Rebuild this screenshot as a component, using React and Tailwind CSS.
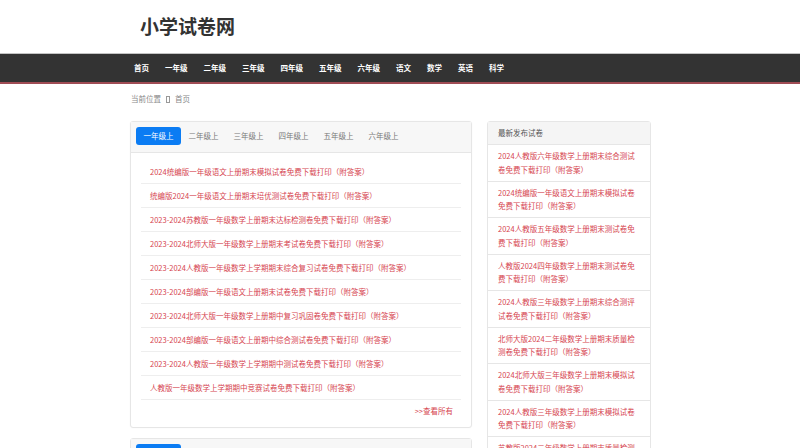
import React from "react";

const navItems = ["首页", "一年级", "二年级", "三年级", "四年级", "五年级", "六年级", "语文", "数学", "英语", "科学"];
const tabs = ["一年级上", "二年级上", "三年级上", "四年级上", "五年级上", "六年级上"];
const tabs2 = ["一年级下", "二年级下", "三年级下", "四年级下", "五年级下", "六年级下"];

const leftItems = [
  "2024统编版一年级语文上册期末模拟试卷免费下载打印（附答案）",
  "统编版2024一年级语文上册期末培优测试卷免费下载打印（附答案）",
  "2023-2024苏教版一年级数学上册期末达标检测卷免费下载打印（附答案）",
  "2023-2024北师大版一年级数学上册期末考试卷免费下载打印（附答案）",
  "2023-2024人教版一年级数学上学期期末综合复习试卷免费下载打印（附答案）",
  "2023-2024部编版一年级语文上册期末试卷免费下载打印（附答案）",
  "2023-2024北师大版一年级数学上册期中复习巩固卷免费下载打印（附答案）",
  "2023-2024部编版一年级语文上册期中综合测试卷免费下载打印（附答案）",
  "2023-2024人教版一年级数学上学期期中测试卷免费下载打印（附答案）",
  "人教版一年级数学上学期期中竞赛试卷免费下载打印（附答案）",
];

const rightItems = [
  ["2024人教版六年级数学上册期末综合测试", "卷免费下载打印（附答案）"],
  ["2024统编版一年级语文上册期末模拟试卷", "免费下载打印（附答案）"],
  ["2024人教版五年级数学上册期末测试卷免", "费下载打印（附答案）"],
  ["人教版2024四年级数学上册期末测试卷免", "费下载打印（附答案）"],
  ["2024人教版三年级数学上册期末综合测评", "试卷免费下载打印（附答案）"],
  ["北师大版2024二年级数学上册期末质量检", "测卷免费下载打印（附答案）"],
  ["2024北师大版三年级数学上册期末模拟试", "卷免费下载打印（附答案）"],
  ["2024人教版三年级数学上册期末模拟试卷", "免费下载打印（附答案）"],
  ["苏教版2024二年级数学上册期末质量检测", "卷免费下载打印（附答案）"],
];

function TabHeader({ list }) {
  return (
    <div className="flex h-[31px] border-b border-[#e6e6e6] bg-[#f7f7f7] px-[5px] pt-[5px]">
      {list.map((t, i) => (
        <span
          key={t}
          className={
            i === 0
              ? "h-[18px] rounded-[3px] bg-[#0b7cf3] px-[7.5px] text-[7.5px] leading-[18px] text-white"
              : "h-[18px] px-[7.5px] text-[7.5px] leading-[18px] text-[#777]"
          }
        >
          {t}
        </span>
      ))}
    </div>
  );
}

export default function App() {
  return (
    <div className="min-h-[448px] bg-white font-['Noto_Sans_CJK_SC',sans-serif] text-[#333]">
      <div className="h-[53px]">
        <div className="ml-[130px] w-[522px] pl-[10px] pt-[13px] text-[19px] font-bold leading-[26px] text-[#333]">
          小学试卷网
        </div>
      </div>
      <div className="h-[31px] border-t border-b-2 border-t-[#c4c4c4] border-b-[#a04c55] bg-[#333]">
        <div className="ml-[126px] flex">
          {navItems.map((n) => (
            <span key={n} className="px-[8px] text-[7.5px] font-bold leading-[28px] text-white">
              {n}
            </span>
          ))}
        </div>
      </div>
      <div className="ml-[131px] flex items-center pt-[10px] text-[7.5px] leading-[10px] text-[#888]">
        <span>当前位置</span>
        <span className="mx-[5px] inline-block h-[7px] w-[4px] border border-[#999]"></span>
        <span>首页</span>
      </div>
      <div className="ml-[130px] mt-[17px] flex w-[522px] items-start gap-[15px]">
        <div className="w-[342px]">
          <div className="rounded-[3px] border border-[#e6e6e6] bg-white shadow-[0_0_2px_rgba(0,0,0,0.04)]">
            <TabHeader list={tabs} />
            <div className="px-[10px] pt-[7px]">
              {leftItems.map((t) => (
                <div
                  key={t}
                  className="border-b border-[#eeeeee] pl-[9px] text-[7.5px] leading-[23px] text-[#d64550] whitespace-nowrap"
                >
                  {t}
                </div>
              ))}
              <div className="pb-[11px] pr-[8px] pt-[6px] text-right text-[7.5px] leading-[10px] text-[#d64550]">
                &gt;&gt;查看所有
              </div>
            </div>
          </div>
          <div className="mt-[10px] rounded-[3px] border border-[#e6e6e6] bg-white">
            <TabHeader list={tabs2} />
            <div className="h-[100px]"></div>
          </div>
        </div>
        <div className="w-[164px] rounded-[3px] border border-[#e6e6e6] bg-white">
          <div className="h-[22px] bg-[#f5f5f5] px-[10px] text-[7.5px] leading-[21px] text-[#555]">
            最新发布试卷
          </div>
          {rightItems.map(([a, b]) => (
            <div
              key={a}
              className="border-t border-[#e6e6e6] px-[10px] py-[4px] text-[7.5px] leading-[13.75px] text-[#d64550]"
            >
              <div className="whitespace-nowrap">{a}</div>
              <div className="whitespace-nowrap">{b}</div>
            </div>
          ))}
        </div>
      </div>
    </div>
  );
}
